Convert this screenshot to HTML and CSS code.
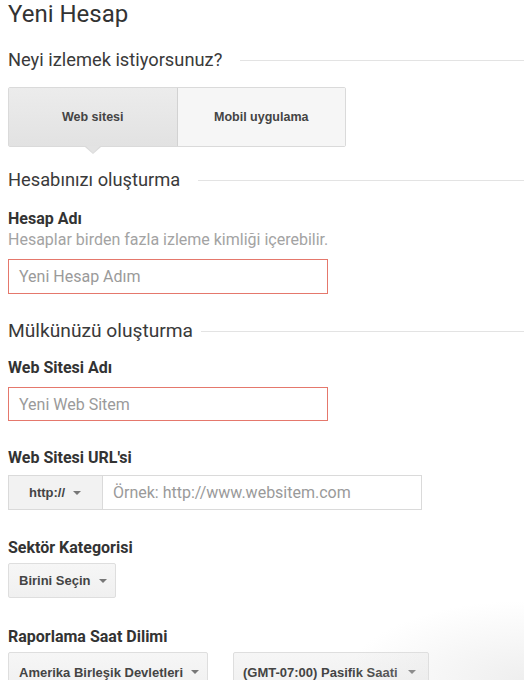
FILE: index.html
```html
<!DOCTYPE html>
<html lang="tr">
<head>
<meta charset="utf-8">
<title>Yeni Hesap</title>
<link rel="stylesheet" href="styles.css">
</head>
<body>
<div class="page">
  <h1 class="title">Yeni Hesap</h1>

  <h2 class="section section-first">Neyi izlemek istiyorsunuz?</h2>
  <div class="tabs">
    <div class="tab tab-active">Web sitesi</div>
    <div class="tab">Mobil uygulama</div>
  </div>

  <h2 class="section section-account">Hesabınızı oluşturma</h2>
  <div class="label label-account">Hesap Adı</div>
  <div class="hint">Hesaplar birden fazla izleme kimliği içerebilir.</div>
  <div class="input input-account">Yeni Hesap Adım</div>

  <h2 class="section section-property">Mülkünüzü oluşturma</h2>
  <div class="label label-site">Web Sitesi Adı</div>
  <div class="input input-site">Yeni Web Sitem</div>

  <div class="label label-url">Web Sitesi URL'si</div>
  <div class="url-group">
    <div class="url-proto">http:// <span class="caret"></span></div>
    <div class="url-input">Örnek: http://www.websitem.com</div>
  </div>

  <div class="label label-sector">Sektör Kategorisi</div>
  <div class="select select-sector">Birini Seçin <span class="caret"></span></div>

  <div class="label label-tz">Raporlama Saat Dilimi</div>
  <div class="select-row">
    <div class="select select-country">Amerika Birleşik Devletleri <span class="caret"></span></div>
    <div class="select select-zone">(GMT-07:00) Pasifik Saati <span class="caret"></span></div>
  </div>
</div>
<div class="fade"></div>
</body>
</html>
```

FILE: styles.css
```css
html, body {
  margin: 0;
  padding: 0;
  background: #ffffff;
}

body {
  font-family: Roboto, "Liberation Sans", Arial, sans-serif;
  color: #333333;
  overflow: hidden;
  height: 680px;
  position: relative;
}

.page {
  padding-left: 8px;
}

.title {
  margin: 0;
  font-size: 24px;
  line-height: 28px;
  font-weight: 400;
  color: #333333;
}

.section {
  display: flex;
  align-items: center;
  margin: 0;
  font-size: 18.3px;
  line-height: 22px;
  font-weight: 400;
  color: #3a3a3a;
}

.section::after {
  content: "";
  flex: 1;
  height: 1px;
  background: #e3e3e3;
  margin-left: 18px;
}

.section-first { margin-top: 21px; }
.section-account { margin-top: 22px; }
.section-property { margin-top: 26px; font-size: 19.2px; }
.section-property::after { margin-left: 8px; }

.tabs {
  display: flex;
  width: 338px;
  height: 60px;
  margin-top: 16px;
  box-sizing: border-box;
  border: 1px solid #dadada;
  border-radius: 2px;
}

.tab {
  position: relative;
  flex: 1;
  display: flex;
  align-items: center;
  justify-content: center;
  font-family: "Liberation Sans", Arial, sans-serif;
  font-weight: 700;
  font-size: 12.5px;
  color: #444444;
  background: #f6f6f6;
}

.tab-active {
  background: linear-gradient(#ececec, #e2e2e2);
  border-right: 1px solid #d2d2d2;
}

.tab-active::before,
.tab-active::after {
  content: "";
  position: absolute;
  left: 50%;
  width: 0;
  height: 0;
  border-style: solid;
  border-color: transparent;
}

.tab-active::before {
  top: 100%;
  margin-left: -8px;
  margin-top: 1px;
  border-width: 7px 8px 0 8px;
  border-top-color: #dadada;
}

.tab-active::after {
  top: 100%;
  margin-left: -7px;
  border-width: 7px 7px 0 7px;
  border-top-color: #e3e3e3;
}

.label {
  font-size: 16px;
  line-height: 18px;
  font-weight: 700;
  color: #333333;
}

.label-account { margin-top: 19px; }
.label-site { margin-top: 17px; }
.label-url { margin-top: 28px; }
.label-sector { margin-top: 29px; }
.label-tz { margin-top: 30px; }

.hint {
  margin-top: 3px;
  font-size: 16px;
  line-height: 18px;
  color: #a3a3a3;
}

.input {
  box-sizing: border-box;
  width: 320px;
  display: flex;
  align-items: center;
  padding-left: 10px;
  border: 1px solid #e5786c;
  font-size: 16px;
  color: #9a9a9a;
  background: #ffffff;
}

.input-account { margin-top: 10px; height: 35px; }
.input-site { margin-top: 10px; height: 34px; }

.url-group {
  display: flex;
  box-sizing: border-box;
  width: 414px;
  height: 35px;
  margin-top: 8px;
  border: 1px solid #dadada;
}

.url-proto {
  width: 94px;
  box-sizing: border-box;
  display: flex;
  align-items: center;
  padding-left: 20px;
  background: #f2f2f2;
  border-right: 1px solid #dadada;
  font-family: "Liberation Sans", Arial, sans-serif;
  font-weight: 700;
  font-size: 13px;
  color: #444444;
}

.url-input {
  flex: 1;
  display: flex;
  align-items: center;
  padding-left: 10px;
  font-size: 16px;
  color: #9a9a9a;
}

.caret {
  display: inline-block;
  width: 0;
  height: 0;
  margin-left: 8px;
  border-style: solid;
  border-width: 4px 4px 0 4px;
  border-color: #777777 transparent transparent transparent;
}

.select {
  box-sizing: border-box;
  height: 35px;
  display: inline-flex;
  align-items: center;
  padding: 0 13px 0 10px;
  border: 1px solid #dedede;
  border-radius: 2px;
  background: linear-gradient(#f6f6f6, #f0f0f0);
  font-family: "Liberation Sans", Arial, sans-serif;
  font-weight: 700;
  font-size: 13px;
  color: #444444;
  white-space: nowrap;
}

.select-sector {
  width: 108px;
  margin-top: 6px;
}

.select-row {
  display: flex;
  gap: 25px;
  margin-top: 6px;
}

.select-country { width: 200px; height: 40px; }
.select-zone { width: 196px; height: 40px; padding-left: 9px; }
.select-zone .caret { margin-left: 10px; }

.fade {
  position: absolute;
  right: 0;
  bottom: 0;
  width: 180px;
  height: 80px;
  background: radial-gradient(ellipse at 100% 100%, rgba(225,225,225,0.55), rgba(255,255,255,0) 70%);
  pointer-events: none;
}
```
